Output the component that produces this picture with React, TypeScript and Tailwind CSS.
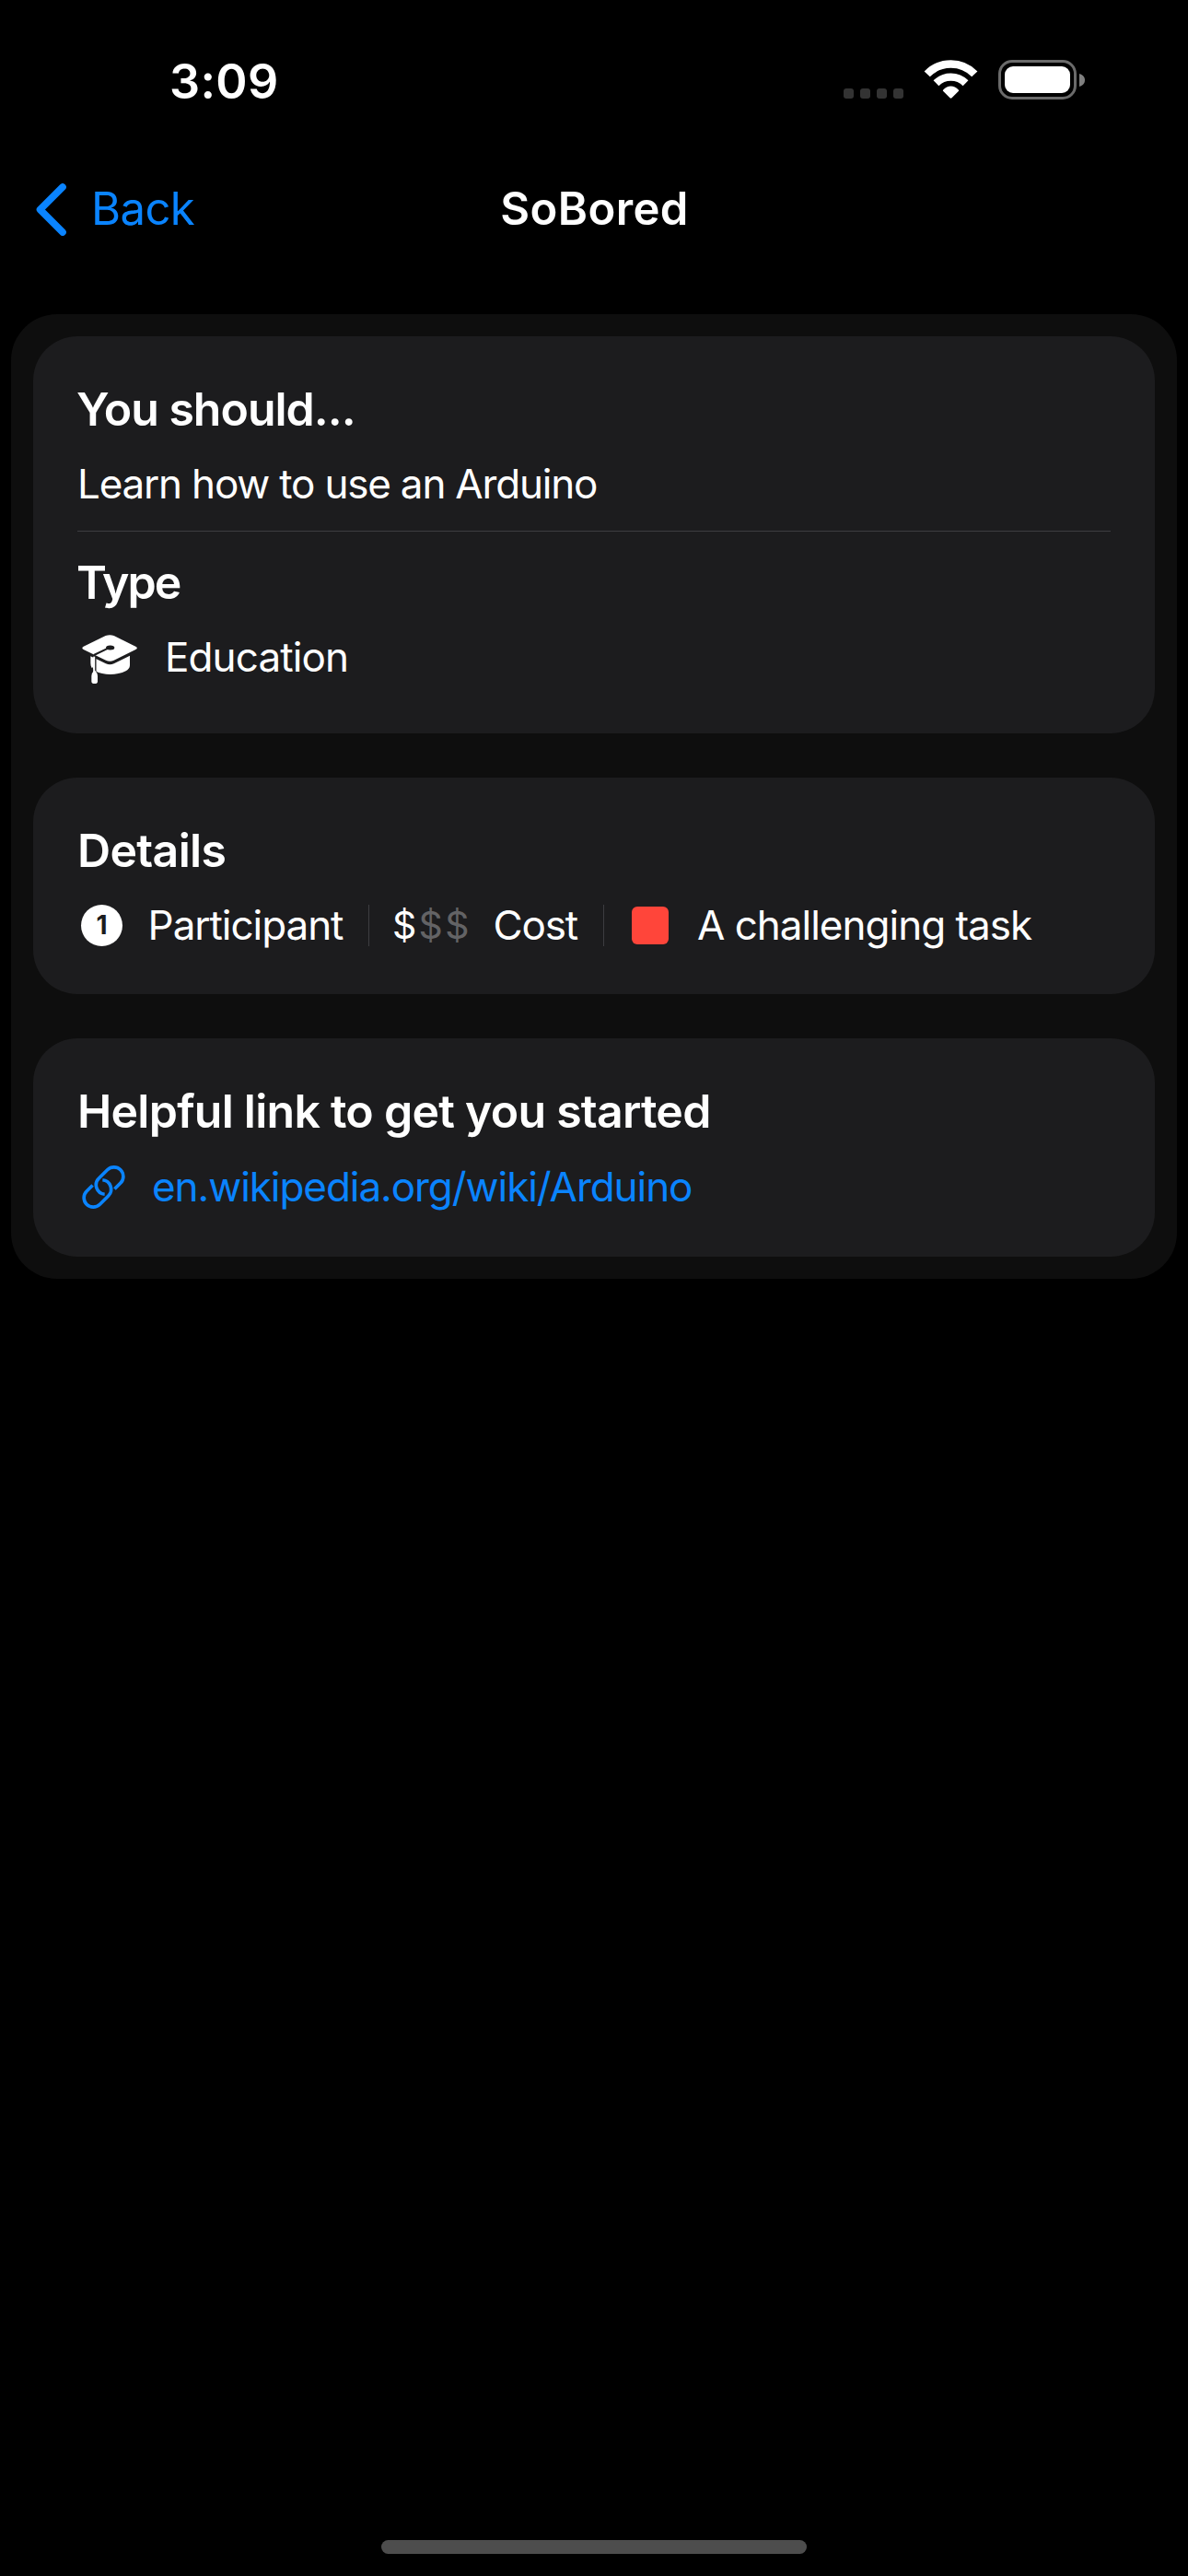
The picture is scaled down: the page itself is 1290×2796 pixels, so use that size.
import type { ReactNode } from 'react'

function WifiIcon() {
  return (
    <svg viewBox="372 75 172 127" className="h-[42px] w-[57px] overflow-visible" fill="none">
      <path d="M380 121.5A108.7 108.7 0 0 1 536 121.5" stroke="#fff" strokeWidth="26" />
      <path d="M409.5 151.5A68.7 68.7 0 0 1 506.5 151.5" stroke="#fff" strokeWidth="25" />
      <path d="M433 178Q430 175.500 433 173Q444 161 458 161Q472 161 483 173Q486 175.500 483 178L461 200Q458 203 455 200Z" fill="#fff" />
    </svg>
  )
}

function Battery() {
  return (
    <div className="flex items-center gap-[3px]">
      <div className="h-[43px] w-[85px] rounded-[15px] border-[3px] border-[#6b6b6b] p-1">
        <div className="size-full rounded-[9px] bg-white" />
      </div>
      <svg viewBox="0 0 6 14" className="h-[14px] w-[6px]" fill="#808080">
        <path d="M0 0C3.500 0.800 6 3.500 6 7C6 10.500 3.500 13.200 0 14Z" />
      </svg>
    </div>
  )
}

function ChevronLeft() {
  return (
    <svg viewBox="0 0 33 57" className="h-[57px] w-[33px]" fill="none" stroke="#0a84ff" strokeWidth="7.600" strokeLinecap="round" strokeLinejoin="round">
      <path d="M29 4L4.500 28.500L29 53" />
    </svg>
  )
}

function GraduationCap() {
  return (
    <svg viewBox="18 18 177 160" className="h-[53.300px] w-[59px] overflow-visible">
      <path d="M43 88L93 112Q106 117 119 112L171 86V118C171 127 165 132 158 136C128 151 86 151 58 136C48 130 43 122 43 110Z" fill="#fff" />
      <path d="M57.500 80V150" stroke="#1c1c1e" strokeWidth="8" />
      <path d="M49 122L57 140V150H43Z" fill="#1c1c1e" />
      <path d="M20 56L92 21Q106 16 119 21L190 56Q199 61 190 66L119 101Q106 107 93 101L20 66Q12 61 20 56Z" fill="#fff" />
      <ellipse cx="107" cy="60" rx="14" ry="7.500" fill="#1c1c1e" />
      <path d="M100 62L54 84" stroke="#1c1c1e" strokeWidth="6" fill="none" />
      <path d="M54.500 89V142" stroke="#fff" strokeWidth="6" fill="none" />
      <path d="M52 137Q56 132 60 137Q66 143 66 152V170Q66 177 56 177Q46 177 46 170V152Q46 143 52 137Z" fill="#fff" />
    </svg>
  )
}

function LinkIcon() {
  return (
    <svg viewBox="27 44 142 142" className="size-[47px] overflow-visible" fill="none" stroke="#0a84ff" strokeWidth="11">
      <path d="M134 121.200L153.600 101.600A30.500 30.500 0 0 0 110.400 58.400L82.400 86.400A30.500 30.500 0 0 0 101.500 138.400" />
      <path d="M62 108.800L42.400 128.400A30.500 30.500 0 0 0 85.600 171.600L113.600 143.600A30.500 30.500 0 0 0 94.500 91.600" />
    </svg>
  )
}

function OneCircle() {
  return (
    <span className="flex size-[45px] shrink-0 items-center justify-center rounded-full bg-white text-[28px] leading-none font-bold text-[#1c1c1e]">
      1
    </span>
  )
}

function Card({ children, className = '' }: { children: ReactNode; className?: string }) {
  return <section className={`flex flex-col gap-6 rounded-[48px] bg-[#1c1c1e] p-12 ${className}`}>{children}</section>
}

function Heading({ children, className }: { children: ReactNode; className: string }) {
  return <h2 className={`-mb-px pt-px text-[50px] leading-[61px] font-semibold whitespace-nowrap ${className}`}>{children}</h2>
}

export default function App() {
  return (
    <div className="flex h-[2796px] w-[1290px] flex-col bg-black font-['Inter',sans-serif] text-white">
      <div className="flex h-[176px] shrink-0 items-start justify-between pt-[59px] pr-[112px] pl-[184px]">
        <div className="text-[52px] leading-[60px] font-semibold tracking-[0.34px]">3:09</div>
        <div className="mt-1.5 flex items-start">
          <div className="mt-[31px] mr-[23px] flex gap-[7px]">
            <i className="size-[11px] rounded-[3px] bg-[#333]" />
            <i className="size-[11px] rounded-[3px] bg-[#333]" />
            <i className="size-[11px] rounded-[3px] bg-[#333]" />
            <i className="size-[11px] rounded-[3px] bg-[#333]" />
          </div>
          <div className="mr-[23px]">
            <WifiIcon />
          </div>
          <Battery />
        </div>
      </div>

      <nav className="grid h-[102px] shrink-0 grid-cols-[1fr_auto_1fr] items-center text-[49px] leading-[60px]">
        <a className="flex items-center gap-[27px] pl-[39px] text-[#0a84ff]">
          <ChevronLeft />
          <span className="tracking-[-0.6px]">Back</span>
        </a>
        <h1 className="pl-px font-semibold tracking-[0.4px]">SoBored</h1>
      </nav>

      <main className="mx-3 mt-[63px] flex flex-col gap-12 rounded-[50px] bg-[#0e0e0e] p-6 text-[44px] leading-[54px] whitespace-nowrap">
        <Card className="pb-14">
          <Heading className="-ml-px tracking-[-1px]">You should...</Heading>
          <p className="tracking-[-1.2px]">Learn how to use an Arduino</p>
          <hr className="h-px border-0 bg-[#3d3d41]" />
          <Heading className="-ml-px tracking-[-1.9px]">Type</Heading>
          <div className="flex h-[54px] items-center pl-1.5">
            <div className="mt-1.5 flex">
              <GraduationCap />
            </div>
            <span className="ml-[30px] tracking-[-0.89px]">Education</span>
          </div>
        </Card>

        <Card>
          <Heading className="tracking-[-0.65px]">Details</Heading>
          <div className="flex h-[54px] items-center pl-1">
            <OneCircle />
            <span className="ml-[27.6px] w-[239.4px] tracking-[-1.05px]">Participant</span>
            <div className="h-[45px] w-px bg-[#3d3d41]" />
            <div className="ml-[25px] flex text-[41px]">
              <span className="w-[28.600px]">$</span>
              <span className="w-[28.600px] text-[#636365]">$</span>
              <span className="w-[28.600px] text-[#636365]">$</span>
            </div>
            <span className="ml-[23.800px] w-[119.400px] tracking-[-1.2px]">Cost</span>
            <div className="h-[45px] w-px bg-[#3d3d41]" />
            <div className="ml-[30px] h-[41px] w-10 rounded-[6px] bg-[#ff453a]" />
            <span className="ml-[31px] tracking-[-1px]">A challenging task</span>
          </div>
        </Card>

        <Card>
          <Heading className="tracking-[-0.75px]">Helpful link to get you started</Heading>
          <a className="flex h-14 items-center pl-[5px] text-[#0a84ff]">
            <LinkIcon />
            <span className="ml-[29px] tracking-[-1.05px]">en.wikipedia.org/wiki/Arduino</span>
          </a>
        </Card>
      </main>

      <div className="mx-auto mt-auto mb-6 h-[15px] w-[462px] shrink-0 rounded-full bg-[#4d4d4d]" />
    </div>
  )
}
